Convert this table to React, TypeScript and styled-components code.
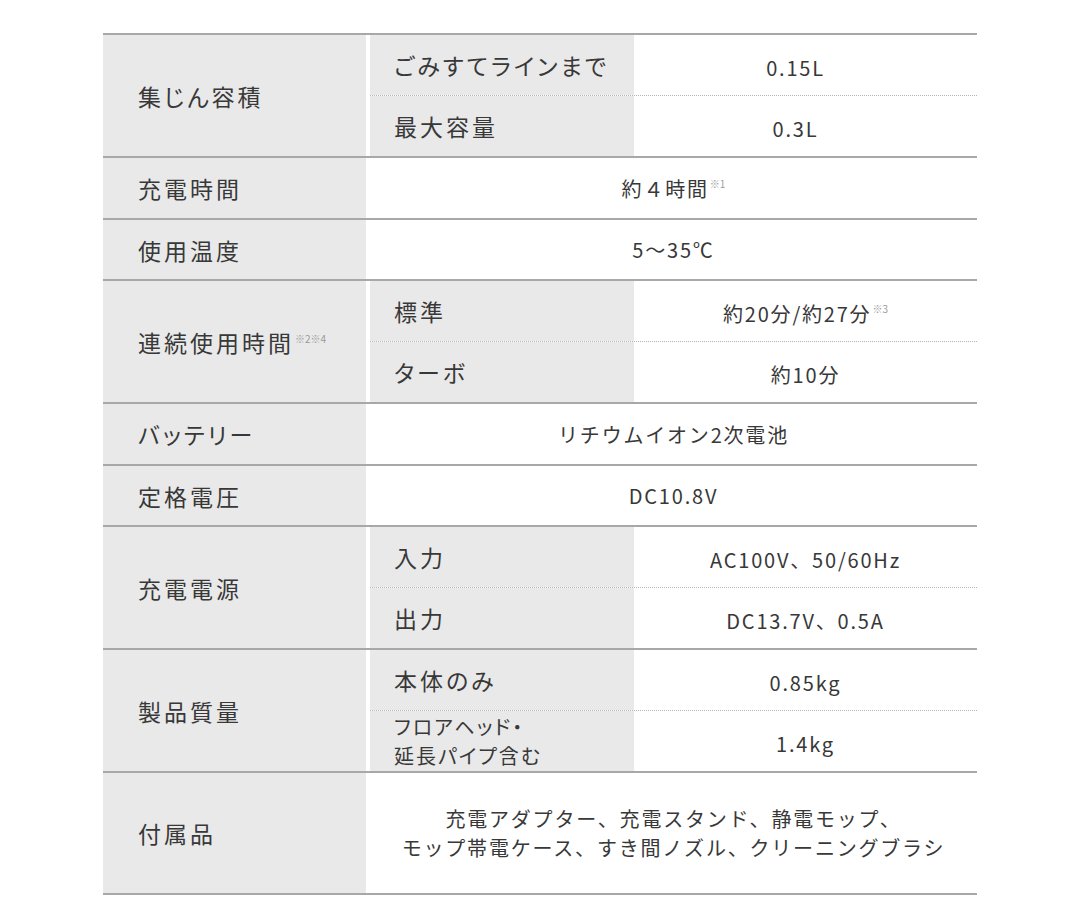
import React from "react";
import styled, { createGlobalStyle } from "styled-components";

const GlobalStyle = createGlobalStyle`
  body {
    margin: 0;
    background: #ffffff;
    font-family: "Noto Sans CJK JP", "Noto Sans", sans-serif;
    color: #333333;
  }
`;

const Page = styled.div`
  width: 1080px;
  min-height: 909px;
  padding-top: 33px;
  box-sizing: border-box;
  display: flex;
  justify-content: center;
  align-items: flex-start;
`;

const Table = styled.div`
  width: 874px;
  border-top: 2px solid #a8a8a8;
  display: flex;
  flex-direction: column;
`;

const Row = styled.div<{ height: number }>`
  display: flex;
  gap: 4px;
  min-height: ${({ height }) => height}px;
  border-bottom: 2px solid #a8a8a8;
`;

const Label = styled.div`
  width: 263px;
  flex-shrink: 0;
  background: #e9e9e9;
  display: flex;
  align-items: center;
  padding-left: 35px;
  box-sizing: border-box;
  font-size: 23px;
  letter-spacing: 3px;
  font-feature-settings: "palt";
  color: #383838;
`;

const Note = styled.sup`
  font-size: 10px;
  letter-spacing: 0;
  color: #9a9a9a;
  vertical-align: 9px;
  line-height: 0;
  margin-left: 1px;
`;

const Value = styled.div`
  flex: 1;
  display: flex;
  align-items: center;
  justify-content: center;
  text-align: center;
  font-size: 20px;
  letter-spacing: 1.8px;
  line-height: 29px;
  color: #383838;
`;

const Group = styled.div`
  flex: 1;
  display: flex;
  flex-direction: column;
`;

const SubRow = styled.div`
  flex: 1;
  display: flex;
  & + & {
    border-top: 1px dotted #b4b4b4;
  }
`;

const SubLabel = styled.div<{ small?: boolean }>`
  width: 264px;
  flex-shrink: 0;
  background: #e9e9e9;
  display: flex;
  align-items: center;
  padding-left: 24px;
  box-sizing: border-box;
  font-size: ${({ small }) => (small ? "20px" : "23px")};
  letter-spacing: ${({ small }) => (small ? "2px" : "3px")};
  line-height: 29px;
  font-feature-settings: "palt";
  color: #383838;
`;

const SubValue = styled(Value)<{ shift?: number }>`
  padding-top: 5px;
  padding-right: ${({ shift }) => shift ?? 0}px;
`;

type Sub = { label: React.ReactNode; value: React.ReactNode; small?: boolean; shift?: number };

const specs: { label: React.ReactNode; value?: React.ReactNode; subs?: Sub[]; height: number }[] = [
  {
    label: "集じん容積",
    height: 121,
    subs: [
      { label: "ごみすてラインまで", value: "0.15L", shift: 20 },
      { label: "最大容量", value: "0.3L", shift: 20 },
    ],
  },
  {
    label: "充電時間",
    height: 60,
    value: (
      <span>
        約４時間<Note>※1</Note>
      </span>
    ),
  },
  { label: "使用温度", height: 59, value: "5〜35℃" },
  {
    label: (
      <span>
        連続使用時間<Note>※2※4</Note>
      </span>
    ),
    height: 121,
    subs: [
      {
        label: "標準",
        value: (
          <span>
            約20分/約27分<Note>※3</Note>
          </span>
        ),
      },
      { label: "ターボ", value: "約10分" },
    ],
  },
  { label: "バッテリー", height: 60, value: "リチウムイオン2次電池" },
  { label: "定格電圧", height: 59, value: "DC10.8V" },
  {
    label: "充電電源",
    height: 121,
    subs: [
      { label: "入力", value: "AC100V、50/60Hz" },
      { label: "出力", value: "DC13.7V、0.5A" },
    ],
  },
  {
    label: "製品質量",
    height: 121,
    subs: [
      { label: "本体のみ", value: "0.85kg" },
      {
        label: (
          <span>
            フロアヘッド・
            <br />
            延長パイプ含む
          </span>
        ),
        value: "1.4kg",
        small: true,
      },
    ],
  },
  {
    label: "付属品",
    height: 120,
    value: (
      <span>
        充電アダプター、充電スタンド、静電モップ、
        <br />
        モップ帯電ケース、すき間ノズル、クリーニングブラシ
      </span>
    ),
  },
];

export default function App() {
  return (
    <>
      <GlobalStyle />
      <Page>
        <Table>
          {specs.map((row, i) => (
            <Row key={i} height={row.height}>
              <Label>{row.label}</Label>
              {row.subs ? (
                <Group>
                  {row.subs.map((sub, j) => (
                    <SubRow key={j}>
                      <SubLabel small={sub.small}>{sub.label}</SubLabel>
                      <SubValue shift={sub.shift}>{sub.value}</SubValue>
                    </SubRow>
                  ))}
                </Group>
              ) : (
                <Value>{row.value}</Value>
              )}
            </Row>
          ))}
        </Table>
      </Page>
    </>
  );
}
